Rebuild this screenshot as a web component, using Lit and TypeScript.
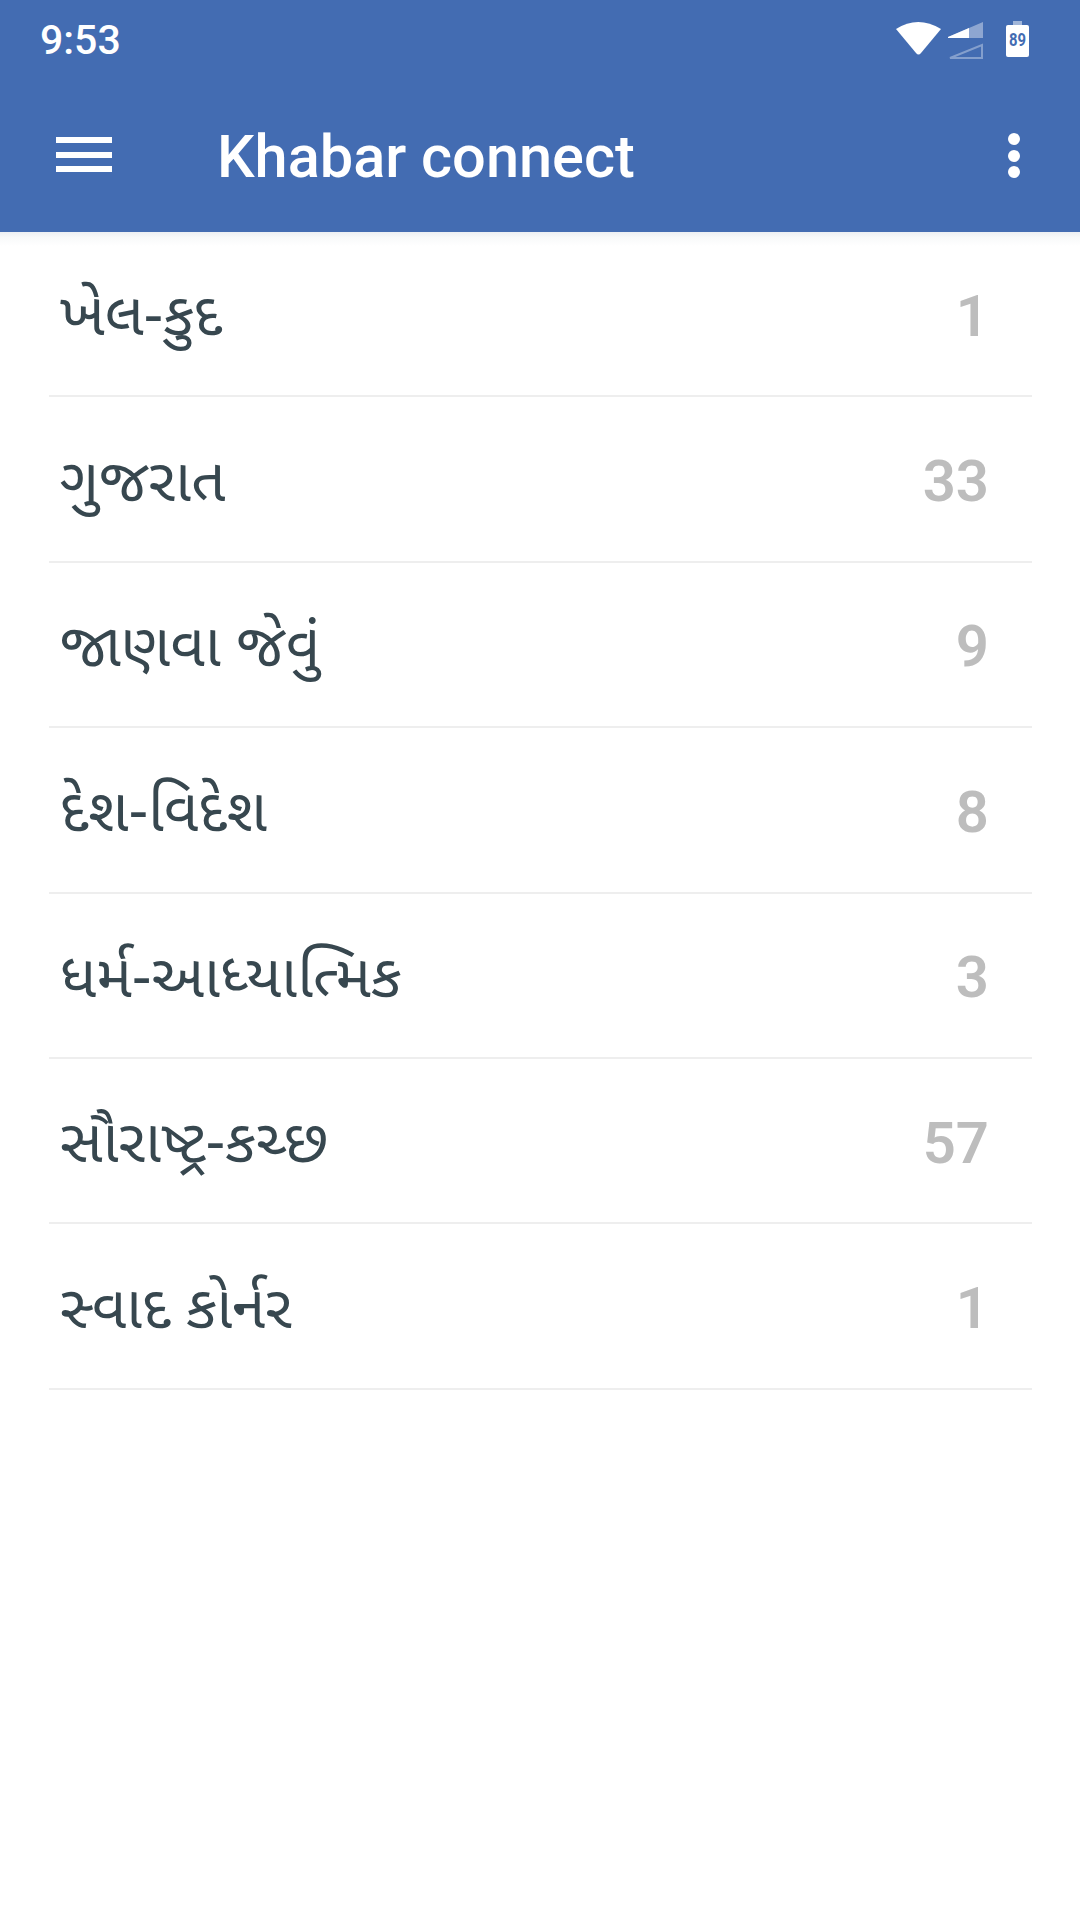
import { LitElement, css, html } from 'lit';
import { customElement } from 'lit/decorators.js';

const CATEGORIES: [string, number][] = [
  ['ખેલ-કુદ', 1],
  ['ગુજરાત', 33],
  ['જાણવા જેવું', 9],
  ['દેશ-વિદેશ', 8],
  ['ધર્મ-આધ્યાત્મિક', 3],
  ['સૌરાષ્ટ્ર-કચ્છ', 57],
  ['સ્વાદ કોર્નર', 1],
];

@customElement('app-root')
export class AppRoot extends LitElement {
  static styles = css`
    :host {
      display: block;
      height: 1920px;
      background: #fff;
      font-family: Roboto, 'Noto Sans', sans-serif;
      overflow: hidden;
    }
    .header {
      height: 232px;
      box-sizing: border-box;
      background: #436cb2;
      color: #fff;
      display: flex;
      flex-direction: column;
    }
    .status {
      height: 80px;
      display: flex;
      align-items: center;
      justify-content: space-between;
      padding: 0 50px 0 40px;
    }
    .time {
      font-size: 41px;
      font-weight: 500;
    }
    .status-icons {
      display: block;
    }
    .battery-text {
      font-family: Roboto, sans-serif;
      font-size: 18.5px;
      font-weight: 700;
      fill: #436cb2;
    }
    .toolbar {
      flex: 1;
      display: flex;
      align-items: center;
    }
    .menu {
      margin: -3px 0 0 56px;
      width: 56px;
      display: flex;
      flex-direction: column;
      gap: 8.5px;
    }
    .menu span {
      height: 6px;
      background: #fff;
    }
    .title {
      margin-left: 105px;
      padding-top: 2px;
      flex: 1;
      font-size: 59.5px;
      font-weight: 500;
    }
    .more {
      margin: -1px 60px 0 0;
      display: flex;
      flex-direction: column;
      gap: 4.5px;
    }
    .more span {
      width: 12px;
      height: 12px;
      border-radius: 50%;
      background: #fff;
    }
    .shadow {
      height: 14px;
      margin-bottom: -14px;
      background: linear-gradient(#eceff3, #f8f9fa 40%, #fff);
    }
    .list {
      padding: 0 48px 0 49px;
    }
    .row {
      height: 165.4px;
      box-sizing: border-box;
      border-bottom: 2px solid #eeeeee;
      display: flex;
      align-items: center;
      justify-content: space-between;
      padding: 0 43px 0 11px;
    }
    .name {
      font-family: 'Noto Sans Gujarati', 'Noto Sans', Roboto, sans-serif;
      font-size: 60px;
      color: #37474f;
      padding-top: 13px;
    }
    .count {
      font-size: 58px;
      font-weight: 600;
      color: #bdbdbd;
      padding-top: 4px;
    }
  `;

  render() {
    return html`
      <div class="header">
        <div class="status">
          <span class="time">9:53</span>
          <svg class="status-icons" width="134" height="80" viewBox="896 0 134 80">
            <path d="M896 29 Q918 15 941 29 L921 53 Q918.500 56 916 53 Z" fill="#fff" />
            <path d="M948 37 L983 22 V38 H948 Z" fill="#fff" fill-opacity=".4" />
            <path d="M948 37 L969 28 V38 H948 Z" fill="#fff" />
            <path d="M950 58 L982 45 V58 Z" fill="none" stroke="#fff" stroke-opacity=".35" stroke-width="2" />
            <rect x="1013" y="21" width="9" height="5" fill="#fff" fill-opacity=".5" />
            <rect x="1006" y="25" width="23" height="32" rx="2" fill="#fff" />
            <text class="battery-text" x="1009" y="46" textLength="17" lengthAdjust="spacingAndGlyphs">89</text>
          </svg>
        </div>
        <div class="toolbar">
          <div class="menu"><span></span><span></span><span></span></div>
          <div class="title">Khabar connect</div>
          <div class="more"><span></span><span></span><span></span></div>
        </div>
      </div>
      <div class="shadow"></div>
      <div class="list">
        ${CATEGORIES.map(
          ([name, count]) => html`
            <div class="row">
              <span class="name">${name}</span>
              <span class="count">${count}</span>
            </div>
          `,
        )}
      </div>
    `;
  }
}
